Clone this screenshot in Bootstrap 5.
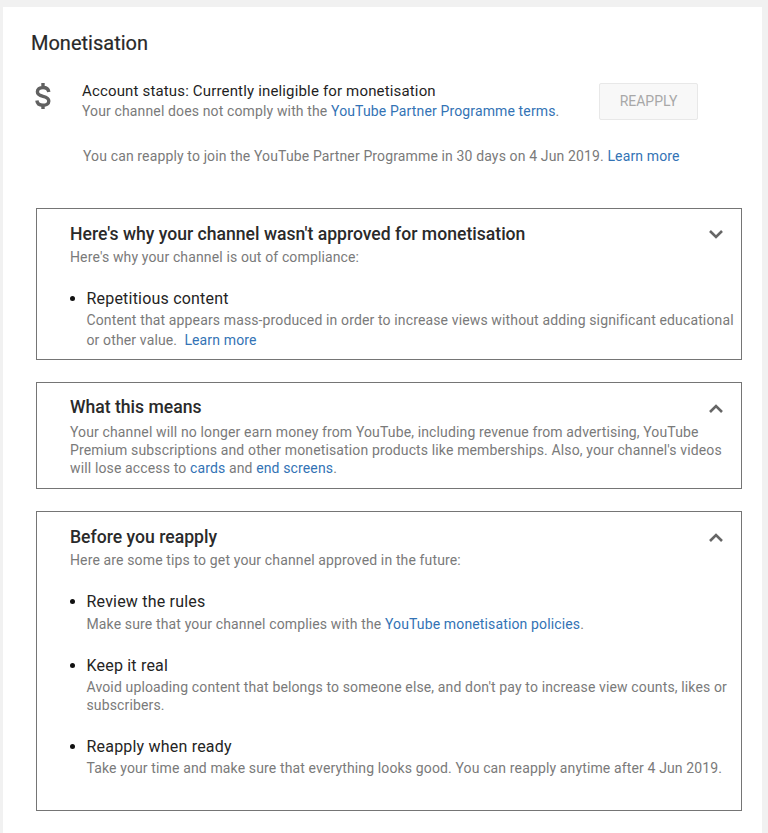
<!DOCTYPE html>
<html lang="en"><head><meta charset="utf-8"><title>Monetisation</title>
<link href="https://cdn.jsdelivr.net/npm/bootstrap@5.3.0/dist/css/bootstrap.min.css" rel="stylesheet">
<style>
html,body{height:100%;}
body{background:#f1f1f1;font-family:Roboto,"Liberation Sans",sans-serif;font-size:14px;line-height:20px;letter-spacing:.135px;color:#7a7a7a;padding:7px 6px 0 3px;overflow:hidden;}
.panel-main{background:#fff;height:826px;padding:23px 20px 0 28px;}
.page-title{font-size:20px;line-height:26px;font-weight:400;letter-spacing:0;color:#282828;margin:0;-webkit-text-stroke:.2px #282828;}
.status-row{margin-top:25px;height:48px;}
.dollar-wrap{width:51px;flex:none;padding-left:2px;}
.status-head{font-size:15px;line-height:20px;color:#1f1f1f;letter-spacing:.16px;}
.status-text{width:517px;flex:none;}
a.yt-link{color:#3373b5;text-decoration:none;}
.btn.reapply-btn{width:99px;height:37px;padding:0;font-size:14px;letter-spacing:0;background:#f8f8f8;border:1px solid #e8e8e8;border-radius:2px;color:#a8a8a8;opacity:1;margin-top:2px;}
.reapply-note{margin:17px 0 0 52px;line-height:20px;}
.info-box{border:1px solid #757575;margin:0 0 22px 5px;padding:12px 8px 0 33px;width:706px;position:relative;}
.box-first{margin-top:42px;height:152px;padding-right:2px;}
.box-second{height:107px;}
.box-third{height:300px;}
.box-head{font-size:17.6px;line-height:24px;font-weight:500;letter-spacing:0;color:#2a2a2a;margin:0 0 2px;}
.box-first .box-head{margin:1px 0 1px;}
.chev{position:absolute;right:17px;top:20px;width:16px;height:11px;}
.box-list{margin:21px 0 0;padding:0 0 0 16.500px;}
.box-list li{color:#111;margin-bottom:21px;}
.box-list li::marker{font-size:16px;}
.item-title{display:block;font-size:16px;line-height:22px;letter-spacing:.2px;color:#242424;}
.item-text{display:block;color:#7a7a7a;line-height:20px;}
.box-second .box-body{line-height:18px;padding-top:2px;}
.box-third .box-head{margin:1px 0 1px;}
.box-third .box-list{margin-top:20px;}
.box-third .item-text{line-height:18px;padding-top:1px;}
.box-third li:first-child .item-text{padding-top:2px;}
.box-third .item-title{line-height:23px;}
</style></head><body>
<div class="panel-main">
<h1 class="page-title">Monetisation</h1>
<div class="status-row d-flex align-items-start">
<div class="dollar-wrap"><svg width="20" height="30" viewBox="0 0 20 30"><path d="M10 2v4M10 24v4M15.800 11C15.400 8 13.400 6.500 10 6.500 6.600 6.500 4.400 8.200 4.400 10.800c0 2.800 2.400 3.800 5.600 4.500 3.400.8 5.800 1.900 5.800 4.600 0 2.700-2.400 4.300-5.800 4.300-3.500 0-5.800-1.700-6.100-4.700" fill="none" stroke="#616161" stroke-width="3.400"/></svg></div>
<div class="status-text"><div class="status-head">Account status: Currently ineligible for monetisation</div><div>Your channel does not comply with the <a class="yt-link" href="#">YouTube Partner Programme terms</a>.</div></div>
<button class="btn reapply-btn" disabled>REAPPLY</button>
</div>
<p class="reapply-note">You can reapply to join the YouTube Partner Programme in 30 days on 4 Jun 2019. <a class="yt-link" href="#">Learn more</a></p>
<section class="info-box box-first">
<h2 class="box-head">Here's why your channel wasn't approved for monetisation</h2>
<svg class="chev" viewBox="0 0 16 11"><path d="M2 2l6 6 6-6" fill="none" stroke="#666" stroke-width="2.600"/></svg>
<div>Here's why your channel is out of compliance:</div>
<ul class="box-list"><li><span class="item-title">Repetitious content</span><span class="item-text">Content that appears mass-produced in order to increase views without adding significant educational or other value.&nbsp; <a class="yt-link" href="#">Learn more</a></span></li></ul>
</section>
<section class="info-box box-second">
<h2 class="box-head">What this means</h2>
<svg class="chev" viewBox="0 0 16 11"><path d="M2 9l6-6 6 6" fill="none" stroke="#666" stroke-width="2.600"/></svg>
<div class="box-body">Your channel will no longer earn money from YouTube, including revenue from advertising, YouTube Premium subscriptions and other monetisation products like memberships. Also, your channel's videos will lose access to <a class="yt-link" href="#">cards</a> and <a class="yt-link" href="#">end screens</a>.</div>
</section>
<section class="info-box box-third">
<h2 class="box-head">Before you reapply</h2>
<svg class="chev" viewBox="0 0 16 11"><path d="M2 9l6-6 6 6" fill="none" stroke="#666" stroke-width="2.600"/></svg>
<div>Here are some tips to get your channel approved in the future:</div>
<ul class="box-list">
<li><span class="item-title">Review the rules</span><span class="item-text">Make sure that your channel complies with the <a class="yt-link" href="#">YouTube monetisation policies</a>.</span></li>
<li><span class="item-title">Keep it real</span><span class="item-text">Avoid uploading content that belongs to someone else, and don't pay to increase view counts, likes or subscribers.</span></li>
<li><span class="item-title">Reapply when ready</span><span class="item-text">Take your time and make sure that everything looks good. You can reapply anytime after 4 Jun 2019.</span></li>
</ul>
</section>
</div>
</body></html>
